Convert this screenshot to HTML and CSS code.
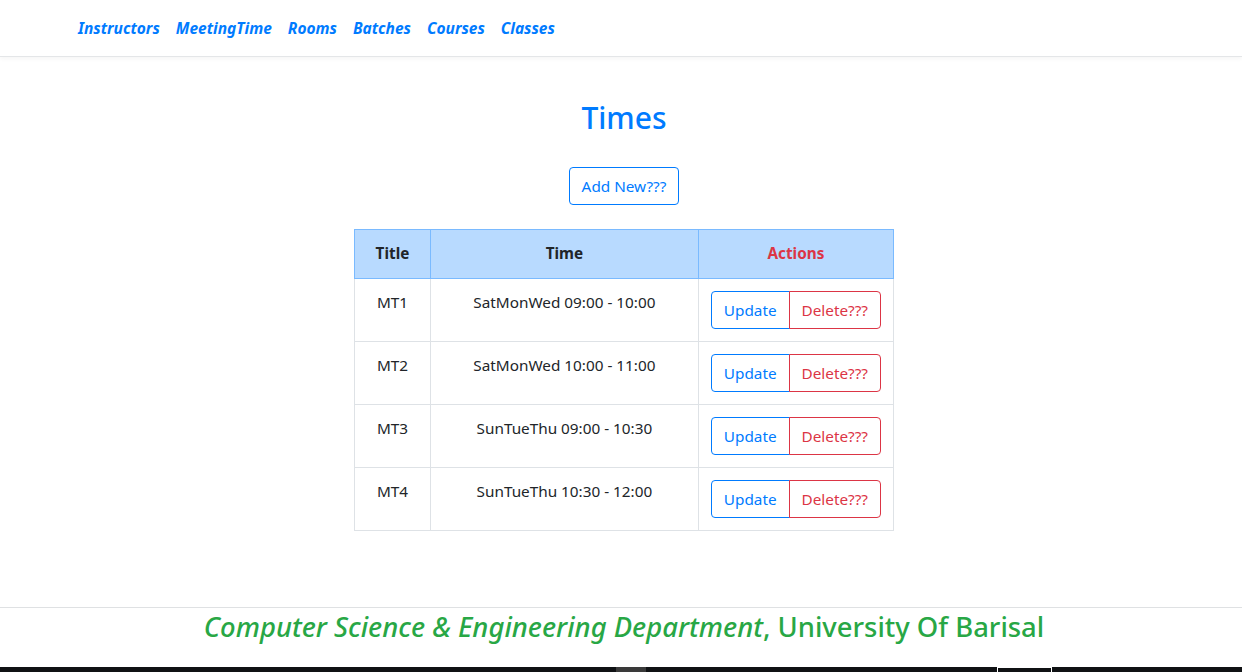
FILE: index.html
```html
<!DOCTYPE html>
<html>
<head>
<meta charset="utf-8">
<link rel="stylesheet" href="styles.css">
</head>
<body>
<div class="page">
  <nav class="navbar">
    <a class="nav-link" href="#">Instructors</a>
    <a class="nav-link" href="#">MeetingTime</a>
    <a class="nav-link" href="#">Rooms</a>
    <a class="nav-link" href="#">Batches</a>
    <a class="nav-link" href="#">Courses</a>
    <a class="nav-link" href="#">Classes</a>
  </nav>
  <main class="content">
    <h2 class="title">Times</h2>
    <a class="btn btn-primary-outline" href="#">Add New???</a>
    <table class="table">
      <thead>
        <tr>
          <th class="col-title">Title</th>
          <th class="col-time">Time</th>
          <th class="col-actions">Actions</th>
        </tr>
      </thead>
      <tbody>
        <tr>
          <td>MT1</td>
          <td>SatMonWed 09:00 - 10:00</td>
          <td><div class="btn-group"><a class="btn btn-primary-outline" href="#">Update</a><a class="btn btn-danger-outline" href="#">Delete???</a></div></td>
        </tr>
        <tr>
          <td>MT2</td>
          <td>SatMonWed 10:00 - 11:00</td>
          <td><div class="btn-group"><a class="btn btn-primary-outline" href="#">Update</a><a class="btn btn-danger-outline" href="#">Delete???</a></div></td>
        </tr>
        <tr>
          <td>MT3</td>
          <td>SunTueThu 09:00 - 10:30</td>
          <td><div class="btn-group"><a class="btn btn-primary-outline" href="#">Update</a><a class="btn btn-danger-outline" href="#">Delete???</a></div></td>
        </tr>
        <tr>
          <td>MT4</td>
          <td>SunTueThu 10:30 - 12:00</td>
          <td><div class="btn-group"><a class="btn btn-primary-outline" href="#">Update</a><a class="btn btn-danger-outline" href="#">Delete???</a></div></td>
        </tr>
      </tbody>
    </table>
  </main>
  <footer class="footer">
    <p class="footer-text"><i>Computer Science &amp; Engineering Department</i>, University Of Barisal</p>
  </footer>
  <div class="taskbar"><span class="taskbar-item"></span><span class="taskbar-box"></span></div>
</div>
</body>
</html>
```

FILE: styles.css
```css
* { box-sizing: border-box; }
html, body { margin: 0; padding: 0; }
body {
  font-family: "Noto Sans", "Open Sans", sans-serif;
  font-size: 16px;
  line-height: 1.5;
  color: #212529;
  background: #fff;
}
.page {
  height: 672px;
  display: flex;
  flex-direction: column;
  overflow: hidden;
}
.navbar {
  height: 57px;
  flex: none;
  display: flex;
  align-items: center;
  padding: 2px 62px 0 70px;
  border-bottom: 1px solid #e4e6e8;
  box-shadow: 0 2px 4px rgba(0,0,0,0.04);
}
.nav-link {
  color: #007bff;
  font-weight: 700;
  font-style: italic;
  text-decoration: none;
  padding: 0 8px;
  font-size: 15.5px;
}
.content {
  flex: 1;
  display: flex;
  flex-direction: column;
  align-items: center;
  padding-top: 43px;
  padding-left: 6px;
}
.title {
  margin: 0 0 31px 0;
  font-size: 30px;
  font-weight: 500;
  line-height: 1.2;
  color: #007bff;
}
.btn {
  display: inline-block;
  height: 38px;
  padding: 0 12px;
  line-height: 36px;
  font-size: 15.3px;
  border: 1px solid;
  border-radius: 4px;
  text-decoration: none;
  background: transparent;
  white-space: nowrap;
}
.btn-primary-outline { color: #007bff; border-color: #007bff; }
.btn-danger-outline { color: #dc3545; border-color: #dc3545; }
.content > .btn { margin-bottom: 24px; }
.table {
  border-collapse: collapse;
  width: 540px;
}
.table th, .table td {
  border: 1px solid #dee2e6;
  padding: 12px;
  text-align: center;
  vertical-align: top;
  font-size: 15.3px;
}
.table th {
  background: #b8daff;
  border-color: #7abaff;
  font-weight: 700;
  height: 49px;
}
.table td { height: 63px; }
.col-title { width: 76px; }
.col-time { width: 268px; }
.col-actions { color: #dc3545; }
.btn-group { display: inline-flex; }
.btn-group .btn:first-child { border-top-right-radius: 0; border-bottom-right-radius: 0; }
.btn-group .btn:last-child { border-top-left-radius: 0; border-bottom-left-radius: 0; margin-left: -1px; }
.footer {
  flex: none;
  border-top: 1px solid #dfe1e3;
  height: 60px;
  text-align: center;
  padding-left: 6px;
}
.footer-text {
  margin: 0;
  padding-top: 1px;
  color: #28a745;
  font-size: 27.4px;
  line-height: 36px;
  font-weight: 500;
}
.taskbar {
  flex: none;
  height: 5px;
  background: #101214;
  display: flex;
}
.taskbar-item {
  margin-left: 616px;
  width: 30px;
  background: #3a3a3a;
}
.taskbar-box {
  margin-left: 351px;
  width: 55px;
  border: 1px solid #fff;
  border-bottom: none;
}
```
